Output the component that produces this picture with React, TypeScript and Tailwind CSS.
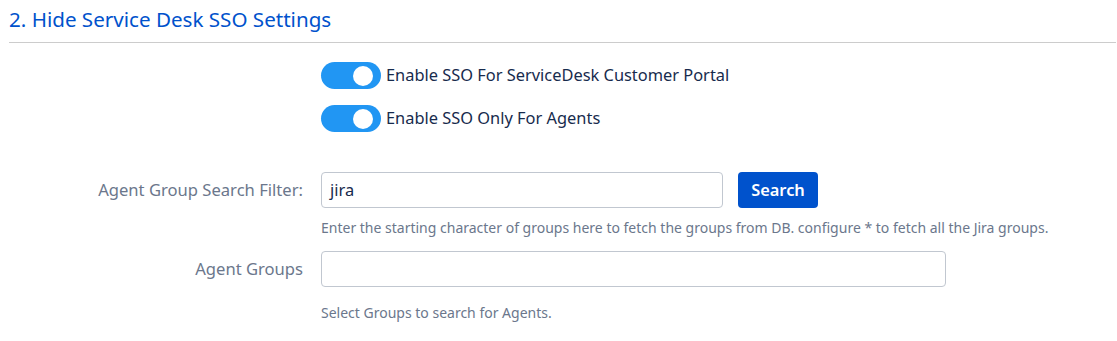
import React from "react";

function Toggle() {
  return (
    <div className="relative h-[27px] w-[60px] shrink-0 rounded-full bg-[#2196f3]">
      <div className="absolute right-[8px] top-[3.5px] h-[20px] w-[20px] rounded-full bg-white" />
    </div>
  );
}

export default function App() {
  return (
    <div
      className="h-[341px] w-[1117px] bg-white"
      style={{ fontFamily: '"Noto Sans", "Open Sans", sans-serif' }}
    >
      <div className="pl-[9px] pr-[1px] pt-[5px]">
        <h2 className="text-[20.6px] leading-[28px] text-[#0052cc]">
          2. Hide Service Desk SSO Settings
        </h2>
        <div className="mt-[9px] h-px bg-[#cccccc]" />
      </div>

      <div className="ml-[321px] mt-[19px] flex flex-col gap-[16px]">
        <div className="flex items-center gap-[5px]">
          <Toggle />
          <span className="text-[16.4px] text-[#172b4d]">
            Enable SSO For ServiceDesk Customer Portal
          </span>
        </div>
        <div className="flex items-center gap-[5px]">
          <Toggle />
          <span className="text-[16.4px] text-[#172b4d]">
            Enable SSO Only For Agents
          </span>
        </div>
      </div>

      <div className="mt-[40px] flex">
        <div className="w-[303px] pt-[8px] text-right text-[16.6px] leading-[20px] text-[#6b778c]">
          Agent Group Search Filter:
        </div>
        <div className="ml-[18px] flex flex-col">
          <div className="flex items-center gap-[15px]">
            <div className="flex h-[36px] w-[402px] items-center rounded-[4px] border border-[#c1c7d0] px-[8px] text-[16.4px] text-[#172b4d]">
              jira
            </div>
            <button className="h-[36px] w-[80px] rounded-[4px] bg-[#0052cc] text-[16.4px] font-semibold text-white">
              Search
            </button>
          </div>
          <div className="mt-[11px] text-[14px] leading-[18px] text-[#6b778c]">
            Enter the starting character of groups here to fetch the groups from DB. configure * to fetch all the Jira groups.
          </div>
        </div>
      </div>

      <div className="mt-[14px] flex">
        <div className="w-[303px] pt-[8px] text-right text-[16.6px] leading-[20px] text-[#6b778c]">
          Agent Groups
        </div>
        <div className="ml-[18px] flex flex-col">
          <div className="h-[36px] w-[625px] rounded-[4px] border border-[#c1c7d0]" />
          <div className="mt-[17px] text-[14px] leading-[18px] text-[#6b778c]">
            Select Groups to search for Agents.
          </div>
        </div>
      </div>
    </div>
  );
}
